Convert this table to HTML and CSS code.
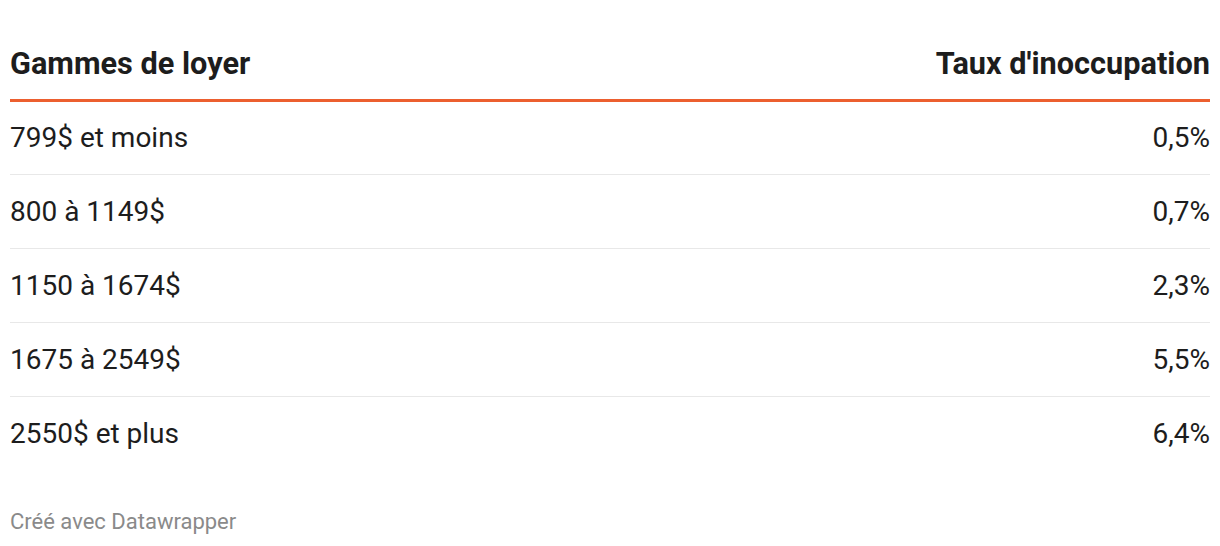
FILE: index.html
```html
<!DOCTYPE html>
<html lang="fr">
<head>
<meta charset="utf-8">
<link rel="stylesheet" href="styles.css">
</head>
<body>
<div class="chart">
  <table class="tbl">
    <thead>
      <tr>
        <th class="left">Gammes de loyer</th>
        <th class="right">Taux d'inoccupation</th>
      </tr>
    </thead>
    <tbody>
      <tr><td class="left">799$ et moins</td><td class="right">0,5%</td></tr>
      <tr><td class="left">800 à 1149$</td><td class="right">0,7%</td></tr>
      <tr><td class="left">1150 à 1674$</td><td class="right">2,3%</td></tr>
      <tr><td class="left">1675 à 2549$</td><td class="right">5,5%</td></tr>
      <tr><td class="left">2550$ et plus</td><td class="right">6,4%</td></tr>
    </tbody>
  </table>
  <div class="footer">Créé avec Datawrapper</div>
</div>
</body>
</html>
```
FILE: styles.css
```css
html, body {
  margin: 0;
  padding: 0;
  background: #ffffff;
}
body {
  font-family: Roboto, "Liberation Sans", sans-serif;
  color: #1d1d1d;
}
.chart {
  padding: 0 10px;
}
.tbl {
  width: 100%;
  border-collapse: collapse;
}
.tbl th {
  height: 100px;
  box-sizing: border-box;
  padding: 0 0 17px 0;
  vertical-align: bottom;
  font-size: 30.7px;
  font-weight: 700;
  line-height: 36px;
  border-bottom: 3px solid #ec5f2f;
}
.tbl td {
  height: 74px;
  box-sizing: border-box;
  padding: 1px 0 0 0;
  vertical-align: middle;
  font-size: 28px;
  line-height: 32px;
  border-bottom: 1px solid #e8e8e8;
}
.tbl tbody tr:last-child td {
  border-bottom: none;
}
.left { text-align: left; }
.right { text-align: right; }
.footer {
  margin-top: 39px;
  font-size: 22px;
  line-height: 26px;
  color: #8a8a8a;
}
```
